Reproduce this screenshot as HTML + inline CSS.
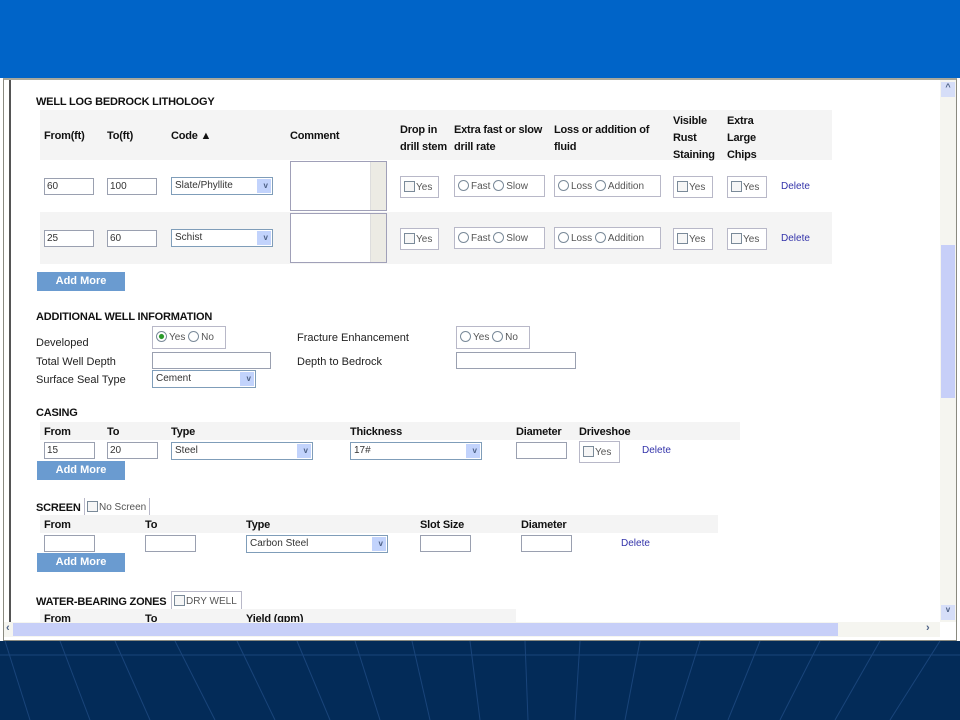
<!DOCTYPE html>
<html><head><meta charset="utf-8"><style>
*{margin:0;padding:0;box-sizing:border-box}
body{width:960px;height:720px;overflow:hidden;background:#fff;font-family:"Liberation Sans",Arial,sans-serif;font-size:11px;color:#222;position:relative}
div,span{position:absolute}
.top{left:0;top:0;width:960px;height:78px;background:#0064c8}
.bot{left:0;top:641px;width:960px;height:79px;background:#032b58}
.frame{left:3px;top:78px;width:954px;height:563px;background:#fff;border:1px solid #8a8a80;border-top:2px solid #a8a89c}
.b{font-weight:bold;font-size:11px;color:#111;white-space:nowrap;letter-spacing:-0.2px}
.t{white-space:nowrap;color:#222}
.in{border:1px solid #9aa0b0;background:#fff;height:17px;font-size:10px;padding:2px 2px;color:#333}
.sel{border:1px solid #7f9db9;background:#fff;height:18px;font-size:10px;padding:2px 3px;color:#333}
.sel:after{content:"";position:absolute;right:1px;top:1px;width:14px;height:14px;background:#c2d3fc}
.sel i{position:absolute;right:4px;top:3px;z-index:2;font-style:normal;font-size:8px;color:#4d6185;font-weight:bold}
.grp{border:1px solid #b8b8c8;background:#fff;height:22px;font-size:10px;color:#555;padding:4px 3px;white-space:nowrap}
.cb{display:inline-block;position:static;width:11px;height:11px;border:1px solid #7a8a99;vertical-align:-2px;margin-right:1px;background:#f6f6f6}
.rd{display:inline-block;position:static;width:11px;height:11px;border:1px solid #7a8a99;border-radius:50%;vertical-align:-2px;margin-right:2px;background:#fff}
.btn{background:#6a9bd0;color:#fff;font-weight:bold;font-size:11px;width:88px;height:19px;text-align:center;line-height:19px}
.del{color:#3333aa;font-size:10px}
.hbg{background:#f4f4f4}
.ta{border:1px solid #a0a0b8;background:#fff;width:97px;height:50px}
.ta:after{content:"";position:absolute;right:0;top:0;width:15px;height:48px;background:#ecebe4;border-left:1px solid #ddd}
</style></head><body>
<div class="top"></div>
<div class="frame"></div>
<div style="left:9px;top:80px;width:2px;height:542px;background:#555"></div>

<div style="left:940px;top:80px;width:16px;height:542px;background:#f5f5f0"></div>
<div style="left:941px;top:82px;width:14px;height:15px;background:#d6def8;color:#4d6185;font-size:9px;text-align:center;font-weight:bold">^</div>
<div style="left:941px;top:245px;width:14px;height:153px;background:#c7cff8"></div>
<div style="left:941px;top:605px;width:14px;height:15px;background:#d6def8;color:#4d6185;font-size:8px;text-align:center;font-weight:bold">v</div>
<div style="left:4px;top:622px;width:936px;height:15px;background:#f5f5f0"></div>
<div style="left:6px;top:622px;width:8px;height:15px;color:#4d6185;font-size:11px;font-weight:bold">‹</div>
<div style="left:13px;top:623px;width:825px;height:13px;background:#c7cff8"></div>
<div style="left:926px;top:622px;width:10px;height:15px;color:#4d6185;font-size:11px;font-weight:bold">›</div>

<div class="b" style="left:36px;top:96px">WELL LOG BEDROCK LITHOLOGY</div>
<div class="hbg" style="left:40px;top:110px;width:792px;height:50px"></div>
<div class="hbg" style="left:40px;top:212px;width:792px;height:52px"></div>
<div class="b" style="left:44px;top:130px">From(ft)</div>
<div class="b" style="left:107px;top:130px">To(ft)</div>
<div class="b" style="left:171px;top:130px">Code ▲</div>
<div class="b" style="left:290px;top:130px">Comment</div>
<div class="b" style="left:400px;top:122px;line-height:17px">Drop in<br>drill stem</div>
<div class="b" style="left:454px;top:122px;line-height:17px">Extra fast or slow<br>drill rate</div>
<div class="b" style="left:554px;top:122px;line-height:17px">Loss or addition of<br>fluid</div>
<div class="b" style="left:673px;top:113px;line-height:17px">Visible<br>Rust<br>Staining</div>
<div class="b" style="left:727px;top:113px;line-height:17px">Extra<br>Large<br>Chips</div>

<div class="in" style="left:44px;top:178px;width:50px">60</div>
<div class="in" style="left:107px;top:178px;width:50px">100</div>
<div class="sel" style="left:171px;top:177px;width:102px">Slate/Phyllite<i>v</i></div>
<div class="ta" style="left:290px;top:161px"></div>
<div class="grp" style="left:400px;top:176px;width:39px"><span class="cb"></span>Yes</div>
<div class="grp" style="left:454px;top:175px;width:91px"><span class="rd"></span>Fast <span class="rd"></span>Slow</div>
<div class="grp" style="left:554px;top:175px;width:107px"><span class="rd"></span>Loss <span class="rd"></span>Addition</div>
<div class="grp" style="left:673px;top:176px;width:40px"><span class="cb"></span>Yes</div>
<div class="grp" style="left:727px;top:176px;width:40px"><span class="cb"></span>Yes</div>
<div class="del" style="left:781px;top:181px">Delete</div>

<div class="in" style="left:44px;top:230px;width:50px">25</div>
<div class="in" style="left:107px;top:230px;width:50px">60</div>
<div class="sel" style="left:171px;top:229px;width:102px">Schist<i>v</i></div>
<div class="ta" style="left:290px;top:213px"></div>
<div class="grp" style="left:400px;top:228px;width:39px"><span class="cb"></span>Yes</div>
<div class="grp" style="left:454px;top:227px;width:91px"><span class="rd"></span>Fast <span class="rd"></span>Slow</div>
<div class="grp" style="left:554px;top:227px;width:107px"><span class="rd"></span>Loss <span class="rd"></span>Addition</div>
<div class="grp" style="left:673px;top:228px;width:40px"><span class="cb"></span>Yes</div>
<div class="grp" style="left:727px;top:228px;width:40px"><span class="cb"></span>Yes</div>
<div class="del" style="left:781px;top:233px">Delete</div>
<div class="btn" style="left:37px;top:272px">Add More</div>

<div class="b" style="left:36px;top:311px">ADDITIONAL WELL INFORMATION</div>
<div class="t" style="left:36px;top:337px">Developed</div>
<div class="t" style="left:36px;top:356px">Total Well Depth</div>
<div class="t" style="left:36px;top:374px">Surface Seal Type</div>
<div class="grp" style="left:152px;top:326px;width:74px;height:23px"><span class="rd" style="background:radial-gradient(#2a9a2a 35%,#fff 45%)"></span>Yes <span class="rd"></span>No</div>
<div class="in" style="left:152px;top:352px;width:119px"></div>
<div class="sel" style="left:152px;top:370px;width:104px">Cement<i>v</i></div>
<div class="t" style="left:297px;top:332px">Fracture Enhancement</div>
<div class="t" style="left:297px;top:356px">Depth to Bedrock</div>
<div class="grp" style="left:456px;top:326px;width:74px;height:23px"><span class="rd"></span>Yes <span class="rd"></span>No</div>
<div class="in" style="left:456px;top:352px;width:120px"></div>

<div class="b" style="left:36px;top:407px">CASING</div>
<div class="hbg" style="left:40px;top:422px;width:700px;height:18px"></div>
<div class="b" style="left:44px;top:426px">From</div>
<div class="b" style="left:107px;top:426px">To</div>
<div class="b" style="left:171px;top:426px">Type</div>
<div class="b" style="left:350px;top:426px">Thickness</div>
<div class="b" style="left:516px;top:426px">Diameter</div>
<div class="b" style="left:579px;top:426px">Driveshoe</div>
<div class="in" style="left:44px;top:442px;width:51px">15</div>
<div class="in" style="left:107px;top:442px;width:51px">20</div>
<div class="sel" style="left:171px;top:442px;width:142px">Steel<i>v</i></div>
<div class="sel" style="left:350px;top:442px;width:132px">17#<i>v</i></div>
<div class="in" style="left:516px;top:442px;width:51px"></div>
<div class="grp" style="left:579px;top:441px;width:41px"><span class="cb"></span>Yes</div>
<div class="del" style="left:642px;top:445px">Delete</div>
<div class="btn" style="left:37px;top:461px">Add More</div>

<div class="b" style="left:36px;top:502px">SCREEN</div>
<div class="grp" style="left:84px;top:498px;width:66px;height:20px;padding:3px 2px;border-top:none;border-bottom:none"><span class="cb"></span>No Screen</div>
<div class="hbg" style="left:40px;top:515px;width:678px;height:18px"></div>
<div class="b" style="left:44px;top:519px">From</div>
<div class="b" style="left:145px;top:519px">To</div>
<div class="b" style="left:246px;top:519px">Type</div>
<div class="b" style="left:420px;top:519px">Slot Size</div>
<div class="b" style="left:521px;top:519px">Diameter</div>
<div class="in" style="left:44px;top:535px;width:51px"></div>
<div class="in" style="left:145px;top:535px;width:51px"></div>
<div class="sel" style="left:246px;top:535px;width:142px">Carbon Steel<i>v</i></div>
<div class="in" style="left:420px;top:535px;width:51px"></div>
<div class="in" style="left:521px;top:535px;width:51px"></div>
<div class="del" style="left:621px;top:538px">Delete</div>
<div class="btn" style="left:37px;top:553px">Add More</div>

<div class="b" style="left:36px;top:596px">WATER-BEARING ZONES</div>
<div class="grp" style="left:171px;top:591px;width:71px;height:19px;padding:3px 2px"><span class="cb"></span>DRY WELL</div>
<div class="hbg" style="left:40px;top:609px;width:476px;height:13px"></div>
<div style="left:40px;top:609px;width:500px;height:13px;overflow:hidden">
<span class="b" style="left:4px;top:4px">From</span>
<span class="b" style="left:105px;top:4px">To</span>
<span class="b" style="left:206px;top:4px">Yield (gpm)</span>
</div>

<div class="bot"></div>
<svg style="position:absolute;left:0;top:641px" width="960" height="79">
<g stroke="#2f5d9c" stroke-width="1" fill="none" opacity="0.5">
<line x1="0" y1="14" x2="960" y2="14"/>
<line x1="115" y1="0" x2="150" y2="79"/>
<line x1="175" y1="0" x2="215" y2="79"/>
<line x1="237" y1="0" x2="275" y2="79"/>
<line x1="297" y1="0" x2="330" y2="79"/>
<line x1="355" y1="0" x2="380" y2="79"/>
<line x1="412" y1="0" x2="430" y2="79"/>
<line x1="470" y1="0" x2="480" y2="79"/>
<line x1="525" y1="0" x2="528" y2="79"/>
<line x1="580" y1="0" x2="575" y2="79"/>
<line x1="640" y1="0" x2="625" y2="79"/>
<line x1="700" y1="0" x2="675" y2="79"/>
<line x1="760" y1="0" x2="728" y2="79"/>
<line x1="820" y1="0" x2="780" y2="79"/>
<line x1="880" y1="0" x2="835" y2="79"/>
<line x1="940" y1="0" x2="890" y2="79"/>
<line x1="60" y1="0" x2="90" y2="79"/>
<line x1="5" y1="0" x2="30" y2="79"/>
</g></svg>
</body></html>
